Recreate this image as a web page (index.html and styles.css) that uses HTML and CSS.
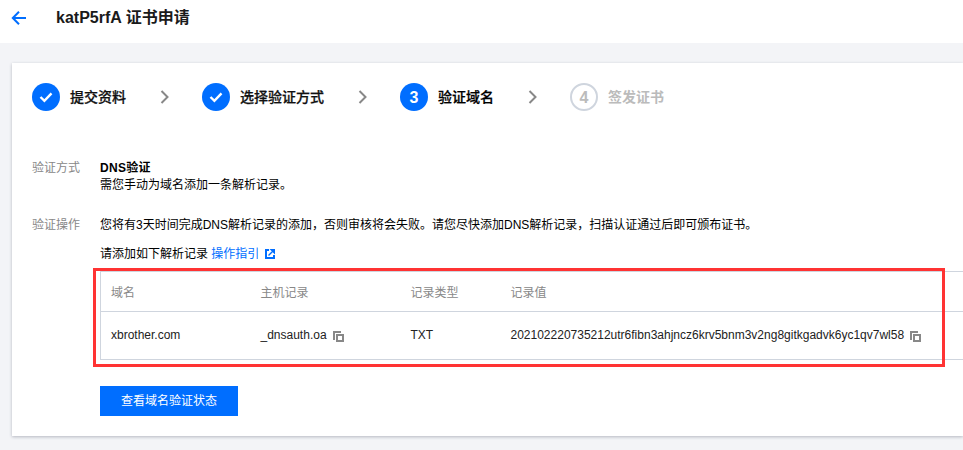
FILE: index.html
```html
<!DOCTYPE html>
<html lang="zh-CN">
<head>
<meta charset="utf-8">
<title>证书申请</title>
<link rel="stylesheet" href="styles.css">
</head>
<body>
<header class="topbar">
  <svg class="back" width="16" height="14" viewBox="0 0 16 14"><path d="M15 7H2.500M8 .8 1.800 7 8 13.200" fill="none" stroke="#006eff" stroke-width="2"/></svg>
  <h1 class="title">katP5rfA 证书申请</h1>
</header>
<main class="content">
  <section class="card">
    <ol class="steps">
      <li class="step">
        <span class="dot"><svg width="14" height="12" viewBox="0 0 14 12"><path d="M1.500 6 5.400 9.800 12.500 2.400" fill="none" stroke="#fff" stroke-width="2.400"/></svg></span>
        <span class="step-label">提交资料</span>
      </li>
      <li class="sep"><svg width="10" height="14" viewBox="0 0 10 14"><path d="M1.500 1 7.500 7l-6 6" fill="none" stroke="#888" stroke-width="2"/></svg></li>
      <li class="step">
        <span class="dot"><svg width="14" height="12" viewBox="0 0 14 12"><path d="M1.500 6 5.400 9.800 12.500 2.400" fill="none" stroke="#fff" stroke-width="2.400"/></svg></span>
        <span class="step-label">选择验证方式</span>
      </li>
      <li class="sep"><svg width="10" height="14" viewBox="0 0 10 14"><path d="M1.500 1 7.500 7l-6 6" fill="none" stroke="#888" stroke-width="2"/></svg></li>
      <li class="step">
        <span class="dot">3</span>
        <span class="step-label current">验证域名</span>
      </li>
      <li class="sep"><svg width="10" height="14" viewBox="0 0 10 14"><path d="M1.500 1 7.500 7l-6 6" fill="none" stroke="#888" stroke-width="2"/></svg></li>
      <li class="step todo">
        <span class="dot">4</span>
        <span class="step-label">签发证书</span>
      </li>
    </ol>

    <div class="form-row method">
      <div class="form-label">验证方式</div>
      <div class="form-value">
        <div class="strong">DNS验证</div>
        <div>需您手动为域名添加一条解析记录。</div>
      </div>
    </div>

    <div class="form-row operate">
      <div class="form-label">验证操作</div>
      <div class="form-value">
        <p class="notice">您将有3天时间完成DNS解析记录的添加，否则审核将会失败。请您尽快添加DNS解析记录，扫描认证通过后即可颁布证书。</p>
        <p class="guide">请添加如下解析记录 <a class="link" href="#">操作指引</a>
          <svg class="ext" width="10" height="10" viewBox="0 0 10 10"><path d="M4 1H1v8h8V6" fill="none" stroke="#006eff" stroke-width="2"/><path d="M5.500 0H10v4.500zM7.500 2.500 3.500 6.500" fill="#006eff" stroke="#006eff" stroke-width="1.400"/></svg>
        </p>
        <table class="records">
          <thead>
            <tr><th class="c1">域名</th><th class="c2">主机记录</th><th class="c3">记录类型</th><th>记录值</th></tr>
          </thead>
          <tbody>
            <tr>
              <td>xbrother.com</td>
              <td>_dnsauth.oa <svg class="copy" width="11" height="11" viewBox="0 0 11 11"><path d="M1 9V1h7" fill="none" stroke="#888" stroke-width="2"/><path d="M4 4h6v6H4z" fill="none" stroke="#888" stroke-width="2"/></svg></td>
              <td>TXT</td>
              <td>202102220735212utr6fibn3ahjncz6krv5bnm3v2ng8gitkgadvk6yc1qv7wl58 <svg class="copy" width="11" height="11" viewBox="0 0 11 11"><path d="M1 9V1h7" fill="none" stroke="#888" stroke-width="2"/><path d="M4 4h6v6H4z" fill="none" stroke="#888" stroke-width="2"/></svg></td>
            </tr>
          </tbody>
        </table>
        <button class="btn" type="button">查看域名验证状态</button>
      </div>
    </div>
  </section>
</main>
<div class="annotation"></div>
</body>
</html>
```
FILE: styles.css
```css
* { box-sizing: border-box; }
html, body { margin: 0; padding: 0; }
body {
  position: relative;
  height: 450px;
  overflow: hidden;
  background: #f3f4f7;
  color: #000;
  font: 12px/17px "Liberation Sans", "Noto Sans CJK SC", sans-serif;
}
.topbar {
  display: flex;
  align-items: center;
  height: 43px;
  padding: 0 0 7px 11px;
  background: #fff;
}
.back { flex: none; }
.title {
  margin: 0 0 0 29px;
  font-size: 16px;
  line-height: 24px;
  font-weight: 700;
  color: #1a1a1a;
}
.content { padding: 20px 0 0 12px; }
.card {
  height: 373px;
  padding: 20px 0 0 20px;
  background: #fff;
  box-shadow: 0 1px 3px rgba(54, 58, 80, .32);
}
.steps {
  display: flex;
  align-items: center;
  margin: 0;
  padding: 0;
  list-style: none;
}
.step { display: flex; align-items: center; }
.dot {
  display: flex;
  align-items: center;
  justify-content: center;
  width: 28px;
  height: 28px;
  border-radius: 50%;
  background: #006eff;
  color: #fff;
  font-size: 16px;
  font-weight: 700;
}
.step-label {
  margin-left: 10px;
  font-size: 14px;
  line-height: 28px;
  font-weight: 500;
  color: #111;
  -webkit-text-stroke: .25px currentColor;
}
.step-label.current { color: #000; }
.sep { display: flex; width: 76px; padding-left: 34px; }
.todo .dot {
  background: #fff;
  border: 2px solid #cfd5de;
  color: #bbb;
}
.todo .step-label { color: #bbb; -webkit-text-stroke: 0; font-weight: 700; }
.form-row { display: flex; }
.form-row.method { margin-top: 49px; }
.form-row.operate { margin-top: 23px; }
.form-label { width: 68px; flex: none; color: #888; }
.form-value { flex: 1; min-width: 0; }
.strong { font-weight: 700; letter-spacing: .3px; }
.notice { margin: 0; }
.guide { margin: 12px 0 0; }
.link { color: #006eff; text-decoration: none; }
.ext { margin-left: 2px; vertical-align: -1px; }
.records {
  width: 100%;
  margin-top: 8px;
  border-collapse: collapse;
  table-layout: fixed;
  border-top: 1px solid #cfd5de;
  border-left: 1px solid #cfd5de;
  border-bottom: 1px solid #cfd5de;
}
.records th, .records td {
  padding: 0 0 0 10px;
  text-align: left;
  white-space: nowrap;
}
.records th {
  height: 40px;
  padding-top: 3px;
  font-weight: 400;
  color: #888;
  border-bottom: 1px solid #cfd5de;
}
.records td { height: 48px; color: #222; }
.c1 { width: 150px; }
.c2 { width: 150px; }
.c3 { width: 100px; }
.copy { margin-left: 3px; vertical-align: -3px; }
.btn {
  display: block;
  width: 138px;
  height: 30px;
  margin-top: 26px;
  border: 0;
  padding: 0;
  background: #006eff;
  color: #fff;
  font: inherit;
}
.annotation {
  position: absolute;
  left: 93px;
  top: 268px;
  width: 852px;
  height: 99px;
  border: 3px solid #ff3333;
}
```
